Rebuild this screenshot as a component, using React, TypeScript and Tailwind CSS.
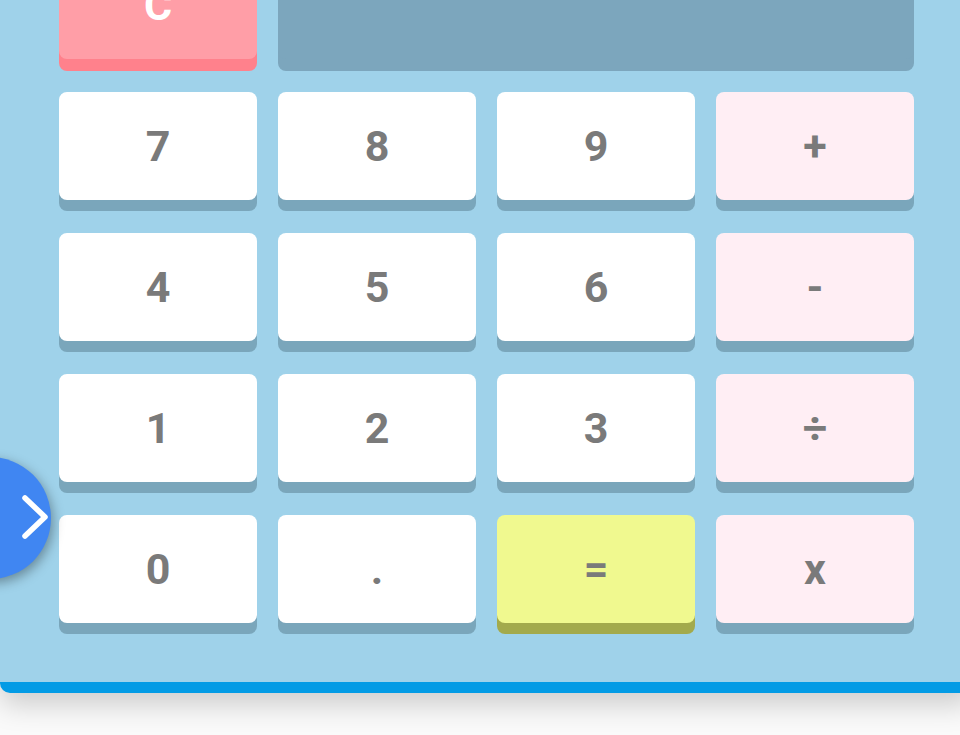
type Key = { label: string; kind: 'num' | 'op' | 'eq' }

const rows: Key[][] = [
  [{ label: '7', kind: 'num' }, { label: '8', kind: 'num' }, { label: '9', kind: 'num' }, { label: '+', kind: 'op' }],
  [{ label: '4', kind: 'num' }, { label: '5', kind: 'num' }, { label: '6', kind: 'num' }, { label: '-', kind: 'op' }],
  [{ label: '1', kind: 'num' }, { label: '2', kind: 'num' }, { label: '3', kind: 'num' }, { label: '÷', kind: 'op' }],
  [{ label: '0', kind: 'num' }, { label: '.', kind: 'num' }, { label: '=', kind: 'eq' }, { label: 'x', kind: 'op' }],
]

const keyStyle = {
  num: 'bg-white text-[#7a7a7a] shadow-[0_11px_0_#7aa6bb]',
  op: 'bg-[#ffeef4] text-[#7a7a7a] shadow-[0_11px_0_#7aa6bb]',
  eq: 'bg-[#f0f98f] text-[#7a7a7a] shadow-[0_11px_0_#a3aa4c]',
}

export default function App() {
  return (
    <div className="relative w-[960px] h-[735px] overflow-hidden bg-[#fafafa]" style={{ fontFamily: 'Roboto, "Noto Sans", sans-serif' }}>
      <div className="w-[973px] mt-[-70px] bg-[#9fd2ea] pt-[21px] pb-[59px] pl-[59px] pr-[59px] border-b-[11px] border-[#039be5] rounded-b-[10px] shadow-[0_12px_28px_rgba(0,0,0,0.18)]">
        <div className="grid grid-cols-[repeat(4,198px)] gap-x-[21px] gap-y-[33px]">
          {/* ── Clear + display ── */}
          <button className="h-[108px] rounded-[8px] bg-[#ff9ea7] shadow-[0_12px_0_#ff818c] text-white text-[43px] font-bold leading-none flex items-center justify-center">
            C
          </button>
          <div className="col-span-3 h-[108px] rounded-[8px] bg-[#7ca6bd] shadow-[0_12px_0_#7ca6bd]" />

          {/* ── Keypad ── */}
          {rows.flat().map((k, i) => (
            <button
              key={i}
              className={`h-[108px] rounded-[8px] text-[43px] font-bold leading-none flex items-center justify-center ${keyStyle[k.kind]}`}
            >
              {k.label}
            </button>
          ))}
        </div>
      </div>

      {/* ── Floating side toggle ── */}
      <div className="absolute left-[-71px] top-[457px] w-[122px] h-[122px] rounded-full bg-[#4086f2] shadow-[2px_4px_12px_rgba(0,0,0,0.35)]">
        <svg className="absolute left-[90px] top-[36px]" width="30" height="50" viewBox="0 0 30 50">
          <polyline points="6,5 26,24 6,43" fill="none" stroke="white" strokeWidth="5.5" strokeLinecap="round" strokeLinejoin="round" />
        </svg>
      </div>
    </div>
  )
}
